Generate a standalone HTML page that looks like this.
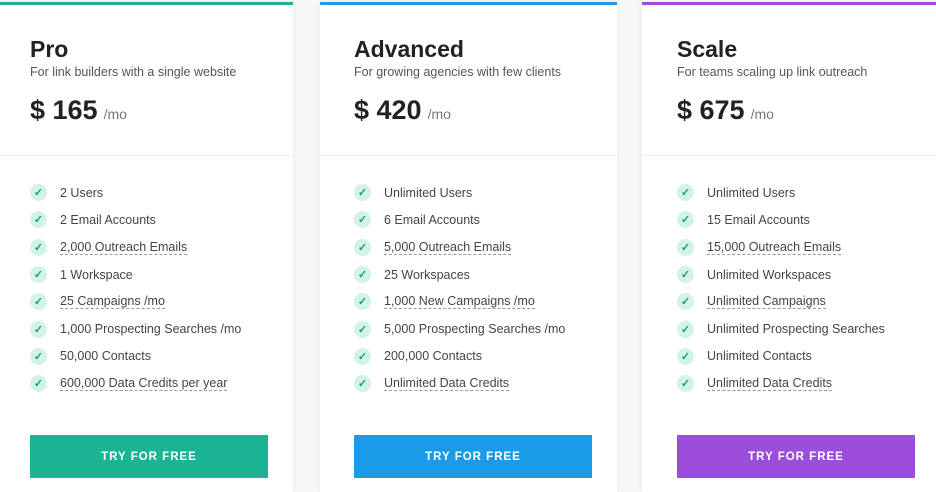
<!DOCTYPE html>
<html><head><meta charset="utf-8"><style>
*{margin:0;padding:0;box-sizing:border-box}
body{width:936px;height:486px;background:#f6f6f7;font-family:"Liberation Sans",sans-serif;position:relative;overflow:hidden;color:#333}
.card{position:absolute;top:2px;height:490px;background:#fff;box-shadow:0 0 6px rgba(0,0,0,.06)}
.bar{height:3px}
.c{position:absolute;left:34px}
h2{position:absolute;top:34px;font-size:23px;font-weight:bold;color:#222}
.sub{position:absolute;top:63px;font-size:12.5px;color:#555}
.price{position:absolute;top:93px;font-size:27px;font-weight:bold;color:#222}
.price span{font-size:14px;font-weight:normal;color:#777;margin-left:6px}
.div{position:absolute;top:153px;left:0;right:0;border-top:1px solid #eee}
ul{list-style:none;position:absolute;top:177px}
li{height:27.3px;font-size:12.5px;color:#444;display:flex;align-items:center}
li i{width:17px;height:17px;border-radius:50%;background:#d4f3e8;margin-right:13px;display:inline-flex;align-items:center;justify-content:center;color:#139e80;font-style:normal;font-size:11px;font-weight:bold}
u{text-decoration:none;border-bottom:1px dashed #999}
.btn{position:absolute;top:433px;width:238px;height:43px;color:#fff;font-weight:bold;font-size:11.5px;letter-spacing:1px;display:flex;align-items:center;justify-content:center}
</style></head><body>
<div class="card" style="left:0;width:293px"><div class="bar" style="background:#1ab394"></div>
<h2 class="c" style="left:30px">Pro</h2><div class="sub c" style="left:30px">For link builders with a single website</div>
<div class="price c" style="left:30px">$ 165<span>/mo</span></div><div class="div"></div>
<ul class="c" style="left:30px"><li><i>✓</i>2 Users</li><li><i>✓</i>2 Email Accounts</li><li><i>✓</i><u>2,000 Outreach Emails</u></li><li><i>✓</i>1 Workspace</li><li><i>✓</i><u>25 Campaigns /mo</u></li><li><i>✓</i>1,000 Prospecting Searches /mo</li><li><i>✓</i>50,000 Contacts</li><li><i>✓</i><u>600,000 Data Credits per year</u></li></ul>
<div class="btn" style="left:30px;background:#1ab394">TRY FOR FREE</div></div>
<div class="card" style="left:320px;width:297px"><div class="bar" style="background:#1b9ae8"></div>
<h2 class="c">Advanced</h2><div class="sub c">For growing agencies with few clients</div>
<div class="price c">$ 420<span>/mo</span></div><div class="div"></div>
<ul class="c"><li><i>✓</i>Unlimited Users</li><li><i>✓</i>6 Email Accounts</li><li><i>✓</i><u>5,000 Outreach Emails</u></li><li><i>✓</i>25 Workspaces</li><li><i>✓</i><u>1,000 New Campaigns /mo</u></li><li><i>✓</i>5,000 Prospecting Searches /mo</li><li><i>✓</i>200,000 Contacts</li><li><i>✓</i><u>Unlimited Data Credits</u></li></ul>
<div class="btn c" style="background:#1b9ae8">TRY FOR FREE</div></div>
<div class="card" style="left:642px;width:300px"><div class="bar" style="background:#9b4ddb"></div>
<h2 class="c" style="left:35px">Scale</h2><div class="sub c" style="left:35px">For teams scaling up link outreach</div>
<div class="price c" style="left:35px">$ 675<span>/mo</span></div><div class="div"></div>
<ul class="c" style="left:35px"><li><i>✓</i>Unlimited Users</li><li><i>✓</i>15 Email Accounts</li><li><i>✓</i><u>15,000 Outreach Emails</u></li><li><i>✓</i>Unlimited Workspaces</li><li><i>✓</i><u>Unlimited Campaigns</u></li><li><i>✓</i>Unlimited Prospecting Searches</li><li><i>✓</i>Unlimited Contacts</li><li><i>✓</i><u>Unlimited Data Credits</u></li></ul>
<div class="btn" style="left:35px;background:#9b4ddb">TRY FOR FREE</div></div>
</body></html>
